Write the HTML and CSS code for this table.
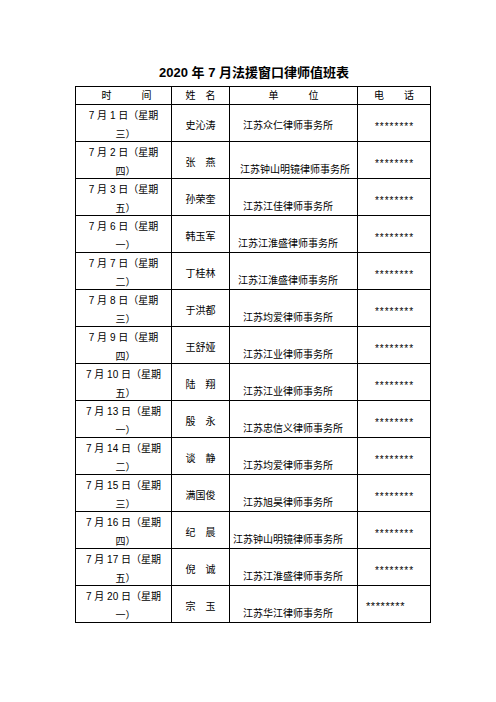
FILE: index.html
```html
<!DOCTYPE html>
<html lang="zh-CN">
<head>
<meta charset="utf-8">
<title>2020年7月法援窗口律师值班表</title>
<link rel="stylesheet" href="styles.css">
</head>
<body>
<div class="page">
  <h1 class="title">2020 年 7 月法援窗口律师值班表</h1>
  <div class="sheet">
    <div class="cell head head-time">时　　　间</div>
    <div class="cell head">姓　名</div>
    <div class="cell head">单　　　位</div>
    <div class="cell head">电　　话</div>

    <div class="cell date"><span>7 月 1 日（星期</span><span>三）</span></div>
    <div class="cell name">史沁涛</div>
    <div class="cell unit unit-mid">江苏众仁律师事务所</div>
    <div class="cell phone">********</div>

    <div class="cell date"><span>7 月 2 日（星期</span><span>四）</span></div>
    <div class="cell name">张　燕</div>
    <div class="cell unit unit-l10">江苏钟山明镜律师事务所</div>
    <div class="cell phone">********</div>

    <div class="cell date"><span>7 月 3 日（星期</span><span>五）</span></div>
    <div class="cell name">孙荣奎</div>
    <div class="cell unit">江苏江佳律师事务所</div>
    <div class="cell phone">********</div>

    <div class="cell date"><span>7 月 6 日（星期</span><span>一）</span></div>
    <div class="cell name">韩玉军</div>
    <div class="cell unit unit-l8">江苏江淮盛律师事务所</div>
    <div class="cell phone">********</div>

    <div class="cell date"><span>7 月 7 日（星期</span><span>二）</span></div>
    <div class="cell name">丁桂林</div>
    <div class="cell unit unit-l8">江苏江淮盛律师事务所</div>
    <div class="cell phone">********</div>

    <div class="cell date"><span>7 月 8 日（星期</span><span>三）</span></div>
    <div class="cell name">于洪都</div>
    <div class="cell unit">江苏均爱律师事务所</div>
    <div class="cell phone">********</div>

    <div class="cell date"><span>7 月 9 日（星期</span><span>四）</span></div>
    <div class="cell name">王舒娅</div>
    <div class="cell unit">江苏江业律师事务所</div>
    <div class="cell phone">********</div>

    <div class="cell date"><span>7 月 10 日（星期</span><span>五）</span></div>
    <div class="cell name">陆　翔</div>
    <div class="cell unit">江苏江业律师事务所</div>
    <div class="cell phone">********</div>

    <div class="cell date"><span>7 月 13 日（星期</span><span>一）</span></div>
    <div class="cell name">殷　永</div>
    <div class="cell unit">江苏忠信义律师事务所</div>
    <div class="cell phone">********</div>

    <div class="cell date"><span>7 月 14 日（星期</span><span>二）</span></div>
    <div class="cell name">谈　静</div>
    <div class="cell unit">江苏均爱律师事务所</div>
    <div class="cell phone">********</div>

    <div class="cell date"><span>7 月 15 日（星期</span><span>三）</span></div>
    <div class="cell name">满国俊</div>
    <div class="cell unit">江苏旭昊律师事务所</div>
    <div class="cell phone">********</div>

    <div class="cell date"><span>7 月 16 日（星期</span><span>四）</span></div>
    <div class="cell name">纪　晨</div>
    <div class="cell unit unit-l3">江苏钟山明镜律师事务所</div>
    <div class="cell phone">********</div>

    <div class="cell date"><span>7 月 17 日（星期</span><span>五）</span></div>
    <div class="cell name">倪　诚</div>
    <div class="cell unit">江苏江淮盛律师事务所</div>
    <div class="cell phone">********</div>

    <div class="cell date"><span>7 月 20 日（星期</span><span>一）</span></div>
    <div class="cell name">宗　玉</div>
    <div class="cell unit">江苏华江律师事务所</div>
    <div class="cell phone phone-last">********</div>
  </div>
</div>
</body>
</html>
```

FILE: styles.css
```css
html, body {
  margin: 0;
  padding: 0;
  background: #ffffff;
}

body {
  width: 496px;
  height: 702px;
  overflow: hidden;
  font-family: "Liberation Sans", "Noto Sans CJK SC", sans-serif;
  color: #000000;
}

.page {
  padding-top: 64px;
}

.title {
  margin: 0 0 5px 0;
  padding-left: 12px;
  font-size: 13px;
  line-height: 17px;
  font-weight: bold;
  text-align: center;
}

.sheet {
  margin-left: 75px;
  width: 355px;
  display: grid;
  grid-template-columns: 96px 58px 128px 73px;
  grid-template-rows: 18px repeat(14, 37px);
  border-top: 1px solid #000;
  border-left: 1px solid #000;
}

.cell {
  box-sizing: border-box;
  border-right: 1px solid #000;
  border-bottom: 1px solid #000;
  font-size: 10px;
  line-height: 20px;
  text-align: center;
  white-space: nowrap;
  overflow: visible;
}

.head {
  line-height: 17px;
}

.head-time {
  padding-left: 6px;
}

.date {
  display: flex;
  flex-direction: column;
  align-items: center;
  line-height: 19px;
  padding-top: 1px;
}

.date span:last-child {
  padding-left: 4px;
}

.name {
  padding-top: 11px;
}

.unit {
  text-align: left;
  padding-left: 13px;
  padding-top: 18px;
}

.unit-mid {
  padding-top: 11px;
}

.unit-l10 {
  padding-left: 10px;
}

.unit-l8 {
  padding-left: 8px;
}

.unit-l3 {
  padding-left: 3px;
}

.phone {
  padding-top: 12px;
  letter-spacing: 1px;
  padding-left: 1px;
}

.phone-last {
  font-size: 11px;
  letter-spacing: 0.6px;
  padding-top: 10px;
  padding-left: 0;
  padding-right: 17px;
}
```
